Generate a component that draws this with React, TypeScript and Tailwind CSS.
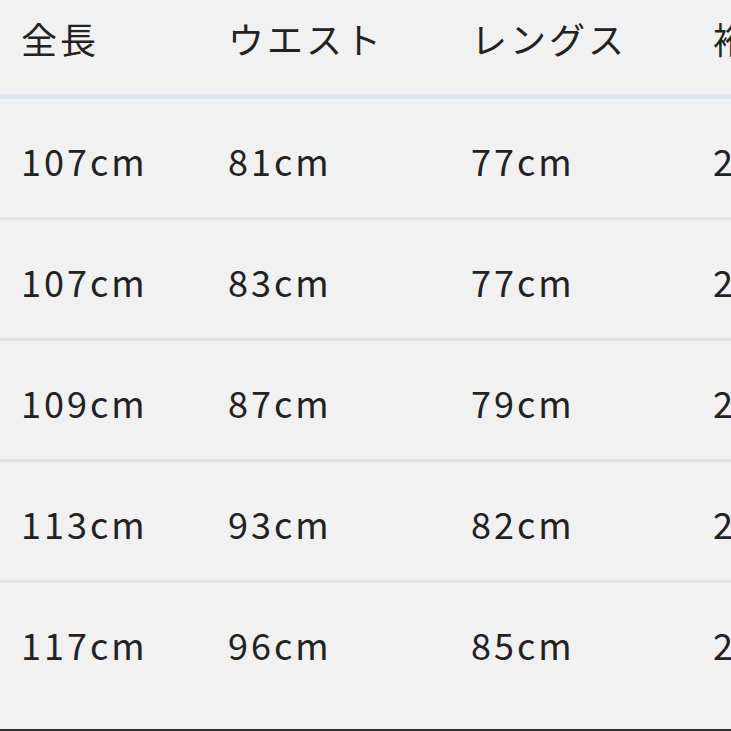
const headers = ['全長', 'ウエスト', 'レングス', '裄丈'];

const rows = [
  ['107cm', '81cm', '77cm', '24cm'],
  ['107cm', '83cm', '77cm', '24cm'],
  ['109cm', '87cm', '79cm', '25cm'],
  ['113cm', '93cm', '82cm', '26cm'],
  ['117cm', '96cm', '85cm', '27cm'],
];

const cols = 'grid grid-cols-[207px_243px_242px_240px] pl-[21px]';

export default function App() {
  return (
    <div
      className="w-[731px] h-[731px] overflow-hidden bg-[#f1f1f2] text-[#222222] flex flex-col"
      style={{ fontFamily: '"Noto Sans CJK JP", "Noto Sans", sans-serif' }}
    >
      <div className={`${cols} h-[99px] shrink-0 pt-[11px] border-b-[5px] border-[#dfe3ec]`}>
        {headers.map((h) => (
          <div key={h} className="text-[36px] leading-[54px] tracking-[3px] whitespace-nowrap">
            {h}
          </div>
        ))}
      </div>

      {rows.map((r, i) => (
        <div
          key={i}
          className={`${cols} h-[121px] shrink-0 items-center pt-[4px] border-b-[3px] ${
            i < rows.length - 1 ? 'border-[#e2e2e4]' : 'border-transparent'
          }`}
        >
          {r.map((v, j) => (
            <div key={j} className="text-[36px] leading-[54px] tracking-[3px] whitespace-nowrap">
              {v}
            </div>
          ))}
        </div>
      ))}

      <div className="flex-1" />
      <div className="h-[2px] shrink-0 bg-[#2b2b2b]" />
    </div>
  );
}
